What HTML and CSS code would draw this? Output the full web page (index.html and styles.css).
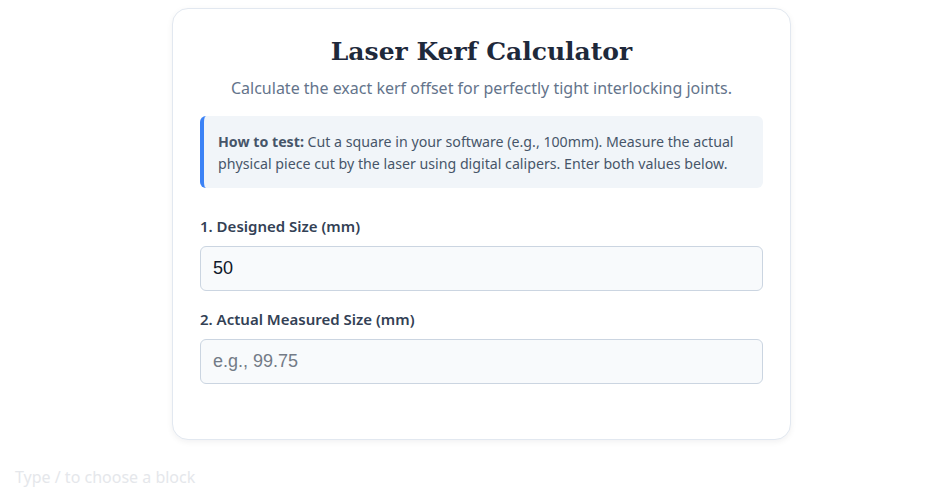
FILE: index.html
```html
<!DOCTYPE html>
<html lang="en">
<head>
<meta charset="utf-8">
<title>Laser Kerf Calculator</title>
<link rel="stylesheet" href="styles.css">
</head>
<body>
<div class="page">
  <div class="card">
    <h1 class="title">Laser Kerf Calculator</h1>
    <p class="subtitle">Calculate the exact kerf offset for perfectly tight interlocking joints.</p>
    <div class="info">
      <strong>How to test:</strong> Cut a square in your software (e.g., 100mm). Measure the actual physical piece cut by the laser using digital calipers. Enter both values below.
    </div>
    <div class="field">
      <label class="label" for="designed">1. Designed Size (mm)</label>
      <input class="input" id="designed" type="text" value="50">
    </div>
    <div class="field">
      <label class="label" for="actual">2. Actual Measured Size (mm)</label>
      <input class="input" id="actual" type="text" placeholder="e.g., 99.75">
    </div>
  </div>
  <div class="block-hint">Type / to choose a block</div>
</div>
</body>
</html>
```

FILE: styles.css
```css
* { box-sizing: border-box; }
html, body { margin: 0; padding: 0; background: #ffffff; }
body { font-family: "Noto Sans", "Open Sans", sans-serif; color: #334155; }
.page { padding: 8px 0 0 0; }
.card {
  width: 619px;
  margin-left: 172px;
  background: #ffffff;
  border: 1px solid #e2e8f0;
  border-radius: 16px;
  box-shadow: 0 2px 6px rgba(15, 23, 42, 0.06);
  padding: 26px 27px 55px 27px;
}
.title {
  margin: 0;
  text-align: center;
  font-family: "DejaVu Serif", Georgia, serif;
  font-weight: bold;
  font-size: 25px;
  line-height: 34px;
  color: #1e293b;
}
.subtitle {
  margin: 7px 0 16px 0;
  text-align: center;
  font-size: 16px;
  line-height: 24px;
  color: #64748b;
}
.info {
  background: #f1f5f9;
  border-left: 4px solid #3b82f6;
  border-radius: 6px;
  padding: 15px 16px 13px 14px;
  font-size: 14.2px;
  line-height: 22px;
  color: #475569;
}
.info strong { color: #475569; font-weight: 700; }
.field { margin-top: 28px; }
.field + .field { margin-top: 18px; }
.label {
  display: block;
  font-size: 15px;
  line-height: 20px;
  font-weight: 600;
  color: #334155;
  margin-bottom: 10px;
}
.input {
  display: block;
  width: 100%;
  height: 45px;
  padding: 0 12px;
  font-family: "Liberation Sans", Arial, sans-serif;
  font-size: 18px;
  color: #0f172a;
  background: #f8fafc;
  border: 1px solid #cbd5e1;
  border-radius: 6px;
  outline: none;
}
.input::placeholder { color: #737b87; }
.block-hint {
  margin: 25px 0 0 15px;
  font-size: 16px;
  line-height: 24px;
  color: #e5e7eb;
}
```
